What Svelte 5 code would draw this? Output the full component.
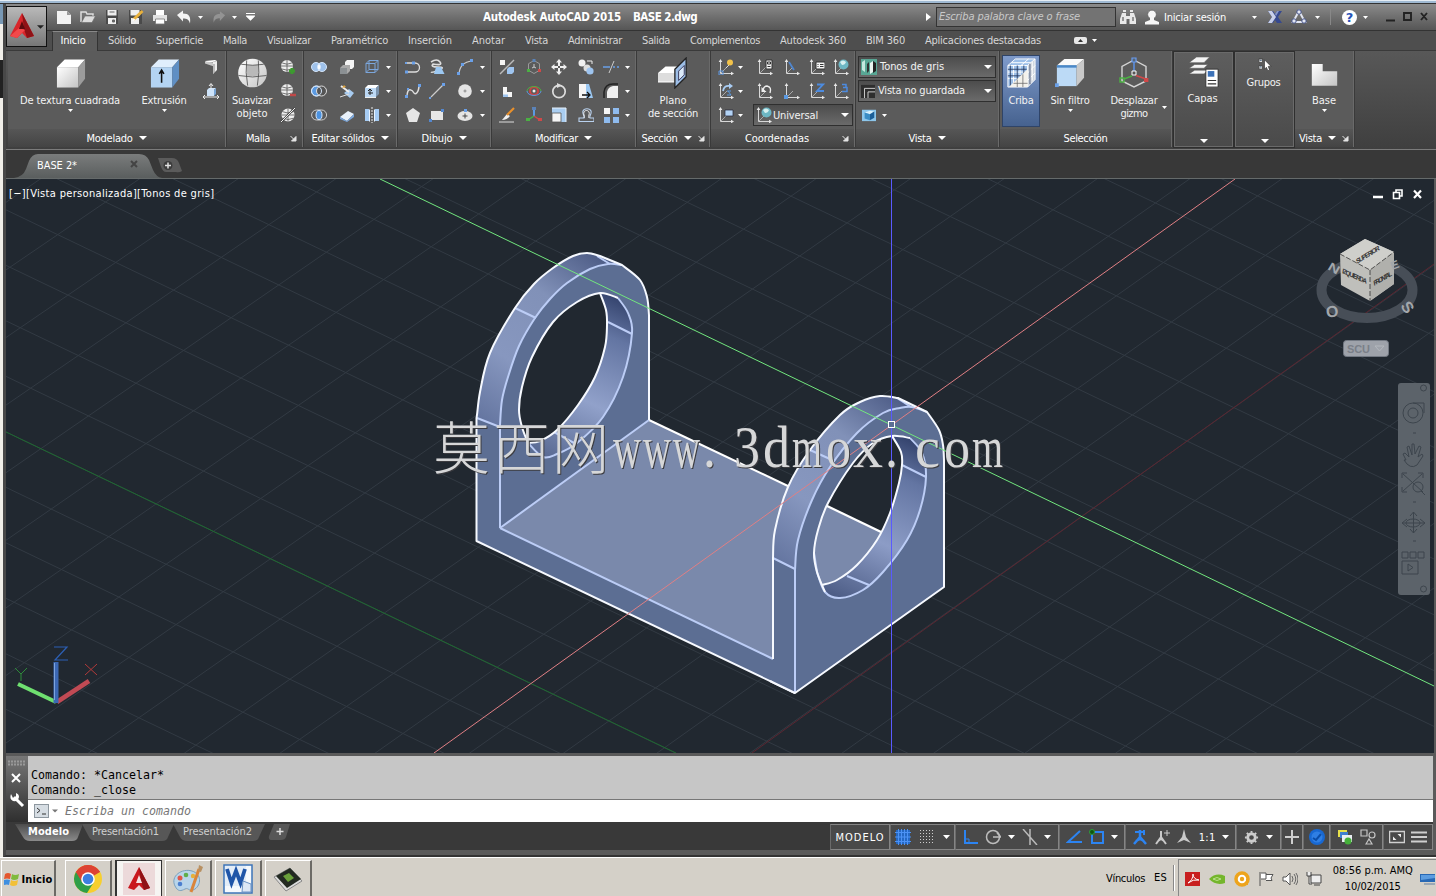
<script>
  // Stretches or tightens tracking so a label occupies the given width.
  function fit(node, w) {
    const n = [...node.textContent].length;
    const natural = node.getBoundingClientRect().width;
    node.style.letterSpacing = (w - natural) / n + 'px';
  }

  // Catmull-Rom spline through the points, as a chain of cubic segments.
  function curve(p, closed = false) {
    const n = p.length;
    const at = (i) => (closed ? p[(i + n) % n] : p[Math.max(0, Math.min(n - 1, i))]);
    let d = '';
    for (let i = 0; i < (closed ? n : n - 1); i++) {
      const [a, b, c, e] = [at(i - 1), at(i), at(i + 1), at(i + 2)];
      d += `C${b[0] + (c[0] - a[0]) / 6} ${b[1] + (c[1] - a[1]) / 6} ${c[0] - (e[0] - b[0]) / 6} ${c[1] - (e[1] - b[1]) / 6} ${c[0]} ${c[1]}`;
    }
    return d;
  }
  const start = (p) => `M${p[0][0]} ${p[0][1]}`;

  const lOuter = [[477,418],[480,392],[490,353],[515,308],[534,284],[553,268],[573,256],[587,253],[600,256]];
  const lEnd = [[622,265],[640,280],[647,297],[649,315]];
  const lFront = [[500,425],[502,400],[508,377],[519,346],[535,318],[550,299],[567,283],[590,269],[608,264],[622,265]];
  const lHole = [[519,410],[522,387],[532,357],[553,322],[577,302],[600,293],[618,298],[628,313],[632,333],[623,377],[603,417],[577,443],[557,454],[543,457],[528,443],[522,427]];
  const lRim = [[600,293],[606,310],[607,325],[605,347],[595,377],[578,405],[557,430],[540,441],[528,443]];
  const rOuter = [[773,558],[775,530],[788,487],[810,450],[840,415],[860,402],[880,396],[898,398]];
  const rEnd = [[927,412],[939,430],[943,445],[944,460]];
  const rFront = [[795,570],[798,540],[812,500],[830,467],[857,433],[883,413],[900,408],[912,407],[927,412]];
  const rHole = [[814,553],[818,530],[828,503],[853,463],[873,443],[892,436],[910,438],[922,453],[926,477],[920,510],[907,540],[883,572],[863,590],[840,598],[825,592],[817,572]];
  const rRim = [[892,436],[901,452],[902,465],[899,483],[890,513],[877,540],[857,565],[837,580],[822,585]];

  const lSil = start(lOuter) + curve(lOuter) + 'L622 265' + curve(lEnd) + 'V420';
  const rSil = start(rOuter) + curve(rOuter) + 'L927 412' + curve(rEnd) + 'V587';
  const lHoleD = start(lHole) + curve(lHole, true) + 'Z';
  const rHoleD = start(rHole) + curve(rHole, true) + 'Z';
  const lSee = start(lRim) + curve(lRim) + curve([lHole[14], lHole[15], ...lHole.slice(0, 6)]) + 'Z';
  const rSee = start(rRim) + curve(rRim) + 'L817 572' + curve([rHole[15], ...rHole.slice(0, 6)]) + 'Z';

  const gridA = Array.from({ length: 24 }, (_, i) => i - 16).map((k) => [429 + 55.5 * k, 1117 + 55.8 * k]);
  const gridB = Array.from({ length: 24 }, (_, i) => i - 6).map((k) => [1288 - 67.6 * k, 265 - 64.6 * k]);

  const mark = [['w',613,28],['w',643,28],['w',673,27],['.',703,13],['3',734,26],['d',763,27],['m',792,30],['o',826,25],['x',853,30],['.',885,13],['c',915,25],['o',944,26],['m',972,31]];

  const tabs = [['Inicio',46,25],['Sólido',48,28],['Superficie',67,47],['Malla',44,24],['Visualizar',64,44],['Paramétrico',77,57],['Inserción',64,44],['Anotar',53,33],['Vista',43,23],['Administrar',74,54],['Salida',48,28],['Complementos',90,70],['Autodesk 360',86,66],['BIM 360',59,39],['Aplicaciones destacadas',136,116]];

  const ucs = '<path d="M2.500 1v13.500H15" fill="none" stroke="#d8d8d8" stroke-width="1"/><path d="M2.500 0l-1.800 3h3.600zM16 14.500l-3-1.800v3.600z" fill="#e8e8e8"/><path d="M3 14l6-6" stroke="#aaa" fill="none"/>';
  const globe = (x, y, r, c = '#eee') => `<circle cx="${x}" cy="${y}" r="${r}" fill="${c}"/><path d="M${x - r} ${y}h${2 * r}M${x} ${y - r}v${2 * r}M${x - r * .8} ${y - r * .5}q${r * .8} ${r * .4} ${r * 1.6} 0M${x - r * .8} ${y + r * .5}q${r * .8} ${r * .4} ${r * 1.6} 0" stroke="#555" stroke-width=".8" fill="none"/>`;

  const icons = {
    new: '<path d="M1 2h10l4 4v9H1z" fill="#f2f2f2"/><path d="M11 2v4h4z" fill="#999"/>',
    open: '<path d="M1 13V3h5l1 2h6v2" fill="none" stroke="#ddd" stroke-width="1.500"/><path d="M1.500 13.500L5 7h10.500L12 13.500z" fill="#dcdcdc" stroke="#666" stroke-width=".6"/>',
    save: '<path d="M2 1h12v14H2z" fill="#4a4a4a"/><path d="M3.500 1h9v5.500h-9zM4 9h8v6H4z" fill="#eee"/><path d="M5.500 3h5M8.500 11h2v2h-2z" stroke="#666" fill="#666"/>',
    saveas: '<path d="M1 1h13v14H1z" fill="#4a4a4a"/><path d="M2.500 1h9v5.500h-9zM3 9h8v6H3z" fill="#eee"/><path d="M5.500 10.500L14.500 2" stroke="#e8b13c" stroke-width="3"/><path d="M4.500 12l3-1-2-2z" fill="#fff"/>',
    print: '<path d="M4 1h8v5H4z" fill="#fff"/><path d="M1 6h14v6H1z" fill="#e3e3e3"/><path d="M3.500 10h9v5h-9z" fill="#fff" stroke="#777" stroke-width=".8"/>',
    undo: '<path d="M1 6l6-4.500v3c6 0 8 3 7 10-1-4-3-5-7-5v3z" fill="#f4f4f4"/>',
    redo: '<path d="M15 6L9 1.500v3c-6 0-8 3-7 10 1-4 3-5 7-5v3z" fill="#939393"/>',
    box: '<path d="M1 5L5 1h10.500L12 5z" fill="#fff"/><path d="M1 5h11v10.500H1z" fill="url(#gw)"/><path d="M12 5l3.500-4v10L12 15.500z" fill="#9c9c9c"/>',
    extr: '<path d="M1 5L5 1h10.500L12 5z" fill="#e0eefc"/><path d="M1 5h11v10.500H1z" fill="#b4d4f3"/><path d="M12 5l3.500-4v10L12 15.500z" fill="#5f8fc4"/><path d="M6.500 13V7M5.300 8.500l1.200-2 1.200 2" stroke="#111" stroke-width=".8" fill="none"/>',
    poly3: '<path d="M2 2l10-1 2 1-9 2z" fill="#fff"/><path d="M2 2.500l9 1v4l-3-1-6-2z" fill="#c9c9c9"/><path d="M10 3l4-1v9l-4 4z" fill="#eee"/><path d="M11 5v9" stroke="#888"/>',
    pull: '<path d="M4 7l2-2h7l-2 2zM4 7h7v6H4z" fill="#cfe4fa"/><path d="M11 7l2-2v6l-2 2z" fill="#79a5d6"/><path d="M8 6V1M6 3l2-2.500L10 3M0 14h16M2 12l-2 2 2 2M14 12l2 2-2 2" stroke="#eee" fill="none"/>',
    sphere: '<circle cx="8" cy="8" r="7.400" fill="url(#gw)"/><path d="M5 3.700q3 .6 6 0v5.600q-3 .6-6 0z" fill="#b9b9b9"/><path d="M.8 9.300q7.200 1.500 14.400 0M2.200 3.500q6 1 11.600 0M5 1.500q-.8 6 .5 13M11 1.500q.8 6-.5 13" stroke="#444" stroke-width=".4" fill="none"/>',
    m1: globe(7, 7, 6) + '<path d="M9 12h6M12 9v6" stroke="#3c9b2f" stroke-width="3"/>',
    m2: globe(7, 7, 6) + '<path d="M10 12h6" stroke="#c04848" stroke-width="2.500"/>',
    m3: globe(8, 8, 6.500) + '<path d="M1 15L15 1" stroke="#444" stroke-width="2"/><path d="M1 15L15 1" stroke="#eee"/>',
    uni: '<circle cx="5" cy="8" r="4.500" fill="#9ec1ea"/><circle cx="11" cy="8" r="4.500" fill="#9ec1ea"/><path d="M8 4.700a4.500 4.500 0 0 0 0 6.600a4.500 4.500 0 0 0 0-6.600" fill="#fff"/><circle cx="5" cy="8" r="4.500" fill="none" stroke="#d5e6fa"/><circle cx="11" cy="8" r="4.500" fill="none" stroke="#d5e6fa"/>',
    sub: '<circle cx="5.500" cy="8" r="5" fill="#5b9ae2" stroke="#d5e6fa"/><circle cx="10.500" cy="8" r="5" fill="#555" stroke="#ddd"/><circle cx="5.500" cy="8" r="5" fill="none" stroke="#d5e6fa"/>',
    int: '<rect x=".6" y="3" width="15" height="10" rx="5" fill="none" stroke="#ccc"/><ellipse cx="8" cy="8" rx="3" ry="4.500" fill="#4b92e0" stroke="#d5e6fa"/>',
    es1: '<path d="M6 3l2-2h7v7l-2 2H6z" fill="#f4f4f4"/><path d="M1 9l3-3h7v6l-3 3H1z" fill="#aaa"/><path d="M1 9h7v6H1z" fill="#8b9093"/>',
    es2: '<path d="M5 10l5-4 5 4-4 5z" fill="#a7cbf0"/><path d="M2 3l8 6" stroke="#eee" stroke-width="2"/><path d="M3 5l2-3 2 2z" fill="#e2a43a"/><path d="M1 14l9-3" stroke="#ddd"/>',
    es3: '<path d="M1 10l8-6 6 3-7 7z" fill="#e8f1fb"/><path d="M1 10l7 4 7-7v3l-7 5-7-3z" fill="#7aa7dd"/>',
    es4: '<path d="M2 4.500h9v9H2zM5 1.500h9v9H5zM2 4.500l3-3M11 4.500l3-3M11 13.500l3-3M2 13.500l3-3" fill="none" stroke="#7ba6dc"/>',
    es5: '<path d="M1 5l3-3h11l-3 3z" fill="#fff"/><path d="M1 5h11v9H1z" fill="#bcd8f4"/><path d="M12 5l3-3v9l-3 3z" fill="#7b93ad"/><path d="M1 14.500h11" stroke="#eee"/><path d="M6 12V6M4 8l2-2 2 2M4 10h5" stroke="#222" fill="none"/>',
    es6: '<path d="M1 2h4v12H1zM11 2h4v12h-4z" fill="#a6cbf2"/><path d="M5 2l1 1v12l-1-1zM11 2l-1 1v12l1-1z" fill="#e8f3ff"/><path d="M8 0v16" stroke="#eee" stroke-dasharray="2 1"/>',
    pl: '<path d="M2 4h8a4.500 4.500 0 0 1 0 9H2" fill="none" stroke="#ddd" stroke-width="1.300"/><path d="M7 2.500h3v3H7zM0 11.500h3v3H0zM0 3h2v2H0z" fill="#6aa0e8"/>',
    spline: '<path d="M2 14C2 2 8 8 9 10s5 0 5-8" fill="none" stroke="#ddd" stroke-width="1.500"/><path d="M0 12h3v3H0zM13 1h3v3h-3zM2 5h2v2H2z" fill="#6aa0e8"/>',
    pent: '<path d="M8 1l7 5-3 9H4L1 6z" fill="#e6e6e6"/>',
    helix: '<path d="M2 3q6-4 9 0t-7 2q-3 3 5 3t1 3-8 2" fill="none" stroke="#ddd" stroke-width="1.600"/><path d="M7 8h5l3.500 7H5z" fill="#9cc8f2"/>',
    line: '<path d="M2 14L14 2" stroke="#ccc" stroke-width="1.200"/><path d="M0 14h2v2H0zM13 0h3v3h-3z" fill="#6aa0e8"/>',
    rect: '<path d="M2 4h12v9H2z" fill="#e6e6e6"/><path d="M0 12h3v3H0zM12 2h3v3h-3z" fill="#5487ce"/>',
    arc: '<path d="M2 15Q3 3 15 2" fill="none" stroke="#ccc" stroke-width="1.200"/><path d="M0 13h3v3H0zM13 0h3v3h-3zM4 4h3v3H4z" fill="#6aa0e8"/>',
    circ: '<circle cx="8" cy="8" r="6.800" fill="#e4e4e4"/><path d="M6.500 8h3M8 6.500v3" stroke="#888"/>',
    ell: '<ellipse cx="8" cy="9" rx="7.500" ry="5" fill="#e4e4e4"/><path d="M5.500 9h5M8 6.500v5" stroke="#444"/><path d="M7 2h3v3H7z" fill="#6aa0e8"/>',
    sc1: '<path d="M1 1h5v5H1z" fill="#f5f5f5"/><path d="M1 15L15 1" stroke="#bbb" stroke-width="1.500"/><path d="M8 10l2-2h5v5l-2 2H8z" fill="#9ec4ef"/>',
    sc2: '<path d="M4 4h4v5h5v5H4z" fill="#f5f5f5"/><path d="M4 11.500h5V14H4z" fill="#9ec4ef"/>',
    brush: '<path d="M0 15h15" stroke="#ddd"/><path d="M3 13l5-6 3 2q-3 4-8 4" fill="#f0f0f0"/><path d="M8 8l7-7" stroke="#e9902c" stroke-width="2.200"/>',
    g1: '<path d="M8 1.500l5.500 3.200v6.600L8 14.500l-5.500-3.200V4.700z" fill="none" stroke="#9a9a9a"/><path d="M8 5v3M8 8l-2 1M8 8l2 1" stroke="#ccc"/><path d="M6.500 0h3v3h-3z" fill="#5b83b8"/><path d="M1 10h3v3H1z" fill="#4bb043"/><path d="M12 10h3v3h-3z" fill="#d04848"/>',
    g2: '<circle cx="8" cy="8" r="4" fill="none" stroke="#c94444" stroke-width="2"/><path d="M1 8a7 4.500 0 0 1 14 0" fill="none" stroke="#4bb043"/><path d="M1 8a7 4.500 0 0 0 14 0" fill="none" stroke="#5b9ae2"/><circle cx="8" cy="8" r="1.500" fill="#eee"/>',
    g3: '<path d="M8 9V1" stroke="#5b9ae2" stroke-width="2"/><path d="M8 9l-6 4" stroke="#4bb043" stroke-width="1.500"/><path d="M8 9l6 4" stroke="#d04848" stroke-width="1.500"/><path d="M0 11h4v3H0z" fill="#4bb043"/><path d="M12 11h4v3h-4z" fill="#d04848"/><path d="M6 0h4v3H6z" fill="#5b83b8"/>',
    move: '<path d="M8 0l3 3.500H9V7H7V3.500H5zM8 16l3-3.500H9V9H7v3.500H5zM0 8l3.500-3v2H7v2H3.500v2zM16 8l-3.500-3v2H9v2h3.500v2z" fill="#f0f0f0"/>',
    rot: '<circle cx="8" cy="8.500" r="6.200" fill="none" stroke="#ddd" stroke-width="1.700"/><path d="M6 0l5 2.500-5 2.500z" fill="#ddd"/>',
    scale: '<path d="M1 1h14v14H1z" fill="#a9cdf0"/><path d="M1 6h9v9H1z" fill="#f4f4f4" stroke="#555" stroke-width=".8"/><path d="M1 1h14v14" stroke="#e7f2fd" fill="none"/>',
    copy: '<circle cx="4" cy="4" r="3.500" fill="#f0f0f0"/><circle cx="9" cy="9" r="3.500" fill="#ddd"/><circle cx="12" cy="12" r="3.600" fill="#9ec4ef"/><path d="M9 2h5v3" stroke="#eee" fill="none"/>',
    stretch: '<path d="M1 1h7v14H1z" fill="#f5f5f5"/><path d="M8 1h3l4 14H8z" fill="#9cc8f2"/><path d="M4 12h7M9 9l3 3-3 3" stroke="#111" fill="none" stroke-width="1.300"/>',
    offset: '<path d="M1 14.500h15v-3.500h-4c-1-2 2-4 1-7s-7-3-8 0 2 5 1 7H1z" fill="none" stroke="#b9d1ee" stroke-width="1.100"/><path d="M6 11c1-2-1-4 0-6s4-2 5 0-1 4 0 6" fill="none" stroke="#eee"/>',
    trim: '<path d="M0 8h7M10 8h2M14 8h2" stroke="#6aa0e8" stroke-width="1.500"/><path d="M6 14L11 2" stroke="#ccc"/>',
    fillet: '<path d="M4 15V9q1-5 6-6h5v12z" fill="#f0f0f0"/><path d="M1 15V9Q2 1 10 1h5" fill="none" stroke="#222" stroke-width="1.500"/>',
    array: '<path d="M1 1h6v6H1z" fill="#f5f5f5"/><path d="M10 1h6v6h-6zM1 10h6v6H1zM10 10h6v6h-6z" fill="#8fbbee"/>',
    u1: ucs + '<path d="M8 9l4-4" stroke="#ddd"/><circle cx="12" cy="3.500" r="3" fill="#f2c24a"/><path d="M1 12h4v4H1z" fill="none" stroke="#5f98e2"/>',
    u2: ucs + '<path d="M5 8q1-6 7-5" fill="none" stroke="#a9cdf4" stroke-width="1.800"/><path d="M11 0l4 3-4 3z" fill="#a9cdf4"/><path d="M9 8h4M9 12h4l-3-4" stroke="#5b9ae2" fill="none"/>',
    u3: ucs + '<path d="M7 3h8v6H7z" fill="#b3d3f5" stroke="#223" stroke-width=".7"/>',
    u4: ucs + '<path d="M9 1h6v9H9z" fill="#f5f5f5" stroke="#333"/><path d="M10.500 3h3v2h-3zM10.500 7.500h3" stroke="#333" fill="none"/>',
    u5: ucs + '<path d="M6 7q1-4 4-4 5 1 3 7" fill="none" stroke="#eee" stroke-width="1.400"/><path d="M4.500 4v5h5z" fill="#eee"/>',
    u6: ucs + '<path d="M5 3l5 8" stroke="#4f86cf" stroke-width="1.800"/>',
    u7: ucs + '<path d="M0 12h4v4H0z" fill="#5b9ae2"/>',
    u8: ucs + '<path d="M7 3h9v7H7z" fill="#f5f5f5" stroke="#333"/><path d="M8.500 5.500h1M11 5.500h3.500M8.500 7.500h1M11 7.500h3.500" stroke="#333"/>',
    u9: ucs + '<path d="M8 1.500h6l-6 6.500h7" stroke="#4c8be0" stroke-width="1.800" fill="none"/>',
    u10: ucs + '<circle cx="10.500" cy="5.500" r="5" fill="#6db7c4"/><path d="M7 3q3-3 6 0-1 3-4 3z" fill="#d7f0f0"/>',
    u11: ucs + '<path d="M9 1.500h4v3h-3 4v4H9" stroke="#4c8be0" stroke-width="1.500" fill="none"/>',
    tonos: '<path d="M0 0h16v16H0z" fill="#58a795"/><path d="M1 3l3-2v12l-3-2z" fill="#c5e8de"/><path d="M6 5l2-2v9l-2 2z" fill="#333"/><path d="M9 4l3-2v11l-3 2z" fill="#e9f4f0"/><path d="M12 2l3 2v8l-3 2z" fill="#222"/>',
    vistag: '<path d="M0 1h16v15H0z" fill="#2e2e2e"/><path d="M4 16V5h12M8 16V9h8" stroke="#ddd" fill="none"/>',
    cubeb: '<path d="M0 2h16v13H0z" fill="#8dc6ea"/><path d="M3 5l6-2 5 1-5 3z" fill="#d9f0fb"/><path d="M3 5l6 2v7l-6-2z" fill="#3a8cc4"/><path d="M9 7l5-3v7l-5 3z" fill="#1b5f98"/>',
    plano: '<path d="M0 8l4-3.500h7V9l-2 4H0z" fill="#fff"/><path d="M0 8h9v4.500H0z" fill="#ddd"/><path d="M9 6l6-6v10l-6 6z" fill="#9cbde6" stroke="#222" stroke-width=".7"/><path d="M11 7l3-3v5l-3 3z" fill="#dcebfb" stroke="#335" stroke-width=".5"/>',
    criba: '<path d="M1 4l4-3.500h10.500v11L11.500 15.500H1z" fill="#9dbfe8"/><path d="M11.500 4l4-3.500v11l-4 4z" fill="#cfd6df"/><path d="M1 4h10.500v11.500H1zM1 4L5 .5h10.500v11l-4 4M11.500 4l4-3.500M4 4v11M7.500 4v11M1 7.500h10M1 11h10M3 2.500h10v11M14 2v10M8 4l4-3.500M11.500 8l4-4M11.500 12l4-4" fill="none" stroke="#fff" stroke-width=".5"/><path d="M2.300 4v11M6 4v11M9.500 4v11M1 6h10M1 9.500h10M12.800 3v11" fill="none" stroke="#22355a" stroke-width=".45"/><path d="M1.500 15.500l10-9.500v9.500z" fill="#f4f2ec"/><path d="M6 15.500V11.500M9 15.500V8.700M4 13.500h7.500" stroke="#666" stroke-width=".4"/>',
    filtro: '<path d="M1 4l4-3.500h10.500l-4 3.500z" fill="#fafafa"/><path d="M1 4h10.500v11H1z" fill="#bcdaf6"/><path d="M11.500 4l4-3.500v10l-4 4.500z" fill="#c9c9c9"/><path d="M1 4.500h10.500" stroke="#4a88c8" stroke-width="1.300"/><path d="M0 13.500h2v2H0z" fill="#6aa0e8"/>',
    gizmo: '<path d="M8 1.500l6 3.200v7.300L8 15l-6-3V4.700z" fill="none" stroke="#d5d5d5" stroke-width=".7"/><path d="M8 2v5" stroke="#5b8fe0" stroke-width=".8"/><path d="M7 .5h2v2H7z" fill="#567" stroke="#6a9cf0" stroke-width=".6"/><path d="M7 7h2v2H7z" fill="#555" stroke="#fff" stroke-width=".5"/><path d="M3 11l4-1.500" stroke="#4bb043" stroke-width=".7"/><path d="M9 9.200l5 1.800" stroke="#d04848" stroke-width=".8"/><path d="M1 10.500h2v2H1z" fill="none" stroke="#4bb043" stroke-width=".7"/><path d="M13 10.500h2.200v2H13z" fill="#d04848"/>',
    capas: '<path d="M0 3l4-3h7L8 3zM0 6l3-2h7L8 6zM0 9l3-2h7L8 9z" fill="#f4f4f4" stroke="#555" stroke-width=".3"/><path d="M9 6.500h6.500V16H9z" fill="#fff" stroke="#222" stroke-width=".4"/><path d="M10 7.500h3.500v3H10z" fill="#3c72b8"/><path d="M10 12.500h4.500M10 14.300h4.500" stroke="#333" stroke-width=".6"/>',
    grupos: '<path d="M2 2h4v4H2zM2 9h4v4H2z" fill="#ddd" stroke="#444"/><path d="M3 3.500h2M3 10.500h2" stroke="#357"/><path d="M8 3l7 7h-3l1.500 4-2 .5L10 11l-2 2z" fill="#fff" stroke="#333" stroke-width=".7"/>',
    base: '<path d="M1 3h6v4h8v8H1z" fill="url(#gw)"/>',
    bino: '<path d="M2 4h4v3h4V4h4l2 6v5H9.500v-5h-3v5H0v-5z" fill="#e9e9e9"/><path d="M3 1h3v2H3zM10 1h3v2h-3z" fill="#e9e9e9"/><path d="M3 8v4M13 8v4" stroke="#444"/>',
    user: '<circle cx="8" cy="5.500" r="4.300" fill="#f6f6f6" stroke="#555" stroke-width=".6"/><path d="M6 9h4v2l5 2v2.500H1V13l5-2z" fill="#f6f6f6"/>',
    x: '<path d="M1 2h5l2 3 2-3h5l-4 6 4 6h-5l-2-3-2 3H1l4-6z" fill="#36498f"/><path d="M1 2h4l4 6-4 6H1l4-6z" fill="#c8d0ea"/><path d="M8 5l2-3h2l-3 5z" fill="#8796c8"/>',
    a360: '<path d="M8 2L2 13h12z" fill="none" stroke="#e2e6f2" stroke-width="2"/><circle cx="8" cy="3" r="2.200" fill="#e2e6f2" stroke="#46558c"/><circle cx="3" cy="12" r="2.200" fill="#e2e6f2" stroke="#46558c"/><circle cx="13" cy="12" r="2.200" fill="#e2e6f2" stroke="#46558c"/>',
    gridf: '<path d="M1 1h14v14H1z" fill="#2468c4"/><path d="M3.500 0v16M6.500 0v16M9.500 0v16M12.500 0v16M0 3.500h16M0 8h16M0 12.500h16" stroke="#4c92f5"/>',
    dots: '<path d="M1 1.500h15M1 4.500h15M1 7.500h15M1 10.500h15M1 13.500h15" stroke="#cfcfcf" stroke-dasharray="1 2"/>',
    ortho: '<path d="M2 1v13h13" stroke="#2c84f2" stroke-width="2" fill="none"/><path d="M2 10h4v4" stroke="#2c84f2" fill="none"/>',
    polar: '<circle cx="8" cy="8" r="6.500" fill="none" stroke="#bdbdbd" stroke-width="1.500"/><path d="M16 8H8M12 4l4 4" stroke="#bdbdbd" stroke-width="1.500"/>',
    iso: '<path d="M1 0l14 16M8 0v16" stroke="#b9b9b9" stroke-width="1.500"/>',
    osnap: '<path d="M14 2L2 13h14" fill="none" stroke="#2c84f2" stroke-width="2"/>',
    osq: '<path d="M3 3h11v11H3z" fill="none" stroke="#2c84f2" stroke-width="2"/><circle cx="3" cy="3" r="2.500" fill="#151" stroke="#2e9e3b"/>',
    an1: '<path d="M8 1v7l-6 7M8 8l6 7M4 12l4-2 4 2" stroke="#2c84f2" stroke-width="2.500" fill="none"/><path d="M3 3h10M12 1v5" stroke="#2c84f2" stroke-width="2"/>',
    an2: '<path d="M7 2v6l-5 7M7 8l5 7M4 12l3-2 3 2" stroke="#c9c9c9" stroke-width="2" fill="none"/><path d="M13 1v6M10 4h6" stroke="#c9c9c9"/>',
    an3: '<path d="M8 0l2 8 5 6-7-3-7 3 5-6z" fill="#c9c9c9"/>',
    gear: '<circle cx="8" cy="8" r="4" fill="none" stroke="#ccc" stroke-width="3"/><path d="M8 1v2M8 13v2M1 8h2M13 8h2M3 3l1.500 1.500M11.500 11.500L13 13M13 3l-1.500 1.500M4.500 11.500L3 13" stroke="#ccc" stroke-width="2"/>',
    plus: '<path d="M8 1v14M1 8h14" stroke="#cfcfcf" stroke-width="2"/>',
    blue: '<circle cx="8" cy="8" r="8" fill="#1868d2"/><circle cx="8" cy="8" r="5.500" fill="#2f7fe4"/><path d="M4 9l3 2 5-6" stroke="#0b4da8" stroke-width="2" fill="none"/>',
    hw: '<path d="M1 1h9v7H1z" fill="#e7e04a"/><path d="M3 3h8v6H3z" fill="#3f7fd0"/><path d="M5 6h10v7H5z" fill="#e8eef2"/><circle cx="11" cy="12" r="3.500" fill="#45b03a"/>',
    isol: '<path d="M1 1h6v6H1zM6 15l3-5 3 5z" fill="none" stroke="#c5c5c5" stroke-width="1.200"/><circle cx="12" cy="6" r="3" fill="none" stroke="#c5c5c5" stroke-width="1.200"/>',
    full: '<path d="M.5 2.500h15v11H.5z" fill="none" stroke="#d0d0d0" stroke-width="1.500"/><path d="M4 11v-3.500L7.500 11zM12 5v3.500L8.500 5z" fill="#eee"/>',
    menu: '<path d="M0 3.500h16M0 8h16M0 12.500h16" stroke="#cfcfcf" stroke-width="1.800"/>'
  };

  const editar = ['uni','es1','es4','>','sub','es2','es5','>','int','es3','es6','>'];
  const dibujo = ['pl','helix','arc','>','spline','line','circ','>','pent','rect','ell','>'];
  const modificar = ['sc1','g1','move','copy','trim','>','sc2','g2','rot','stretch','fillet','>','brush','g3','scale','offset','array','>'];
  const coord = ['u1','>','u4','u6','u8','u10','u2','>','u5','u7','u9','u11','u3','>'];
</script>

{#snippet ic(name, s = 16)}
  <svg class="ic" width={s} height={s} viewBox="0 0 16 16">{@html icons[name]}</svg>
{/snippet}
{#snippet arr(w = 7)}
  <svg class="arr" width={w} height={Math.ceil(w / 2)} viewBox="0 0 8 4" preserveAspectRatio="none"><path d="M0 0h8L4 4z" fill="#fff" /></svg>
{/snippet}
{#snippet launch()}
  <svg class="launch" width="7" height="7" viewBox="0 0 7 7"><path d="M.5 1l4 4M6 1.500V6H1.500z" stroke="#e5e5e5" fill="#e5e5e5" /></svg>
{/snippet}
{#snippet foot(label, w, tri = true, lau = false)}
  <div class="foot"><span use:fit={w}>{label}</span>{#if tri}{@render arr(8)}{/if}{#if lau}{@render launch()}{/if}</div>
{/snippet}
{#snippet cells(list)}
  {#each list as c}{#if c === '>'}<i class="c">{@render arr(5)}</i>{:else}<i class="c">{@render ic(c)}</i>{/if}{/each}
{/snippet}

<div class="screen">
  <svg width="0" height="0" class="defs"><defs>
    <linearGradient id="gw" x1="0" y1="0" x2="1" y2="1"><stop offset="0" stop-color="#fff" /><stop offset="1" stop-color="#c4c4c4" /></linearGradient>
  </defs></svg>
  <div class="strip"></div>
  <div class="mid">
    <div class="edge"><b></b><u></u><s></s></div>
    <div class="win">
      <div class="appbtn">
        <svg width="26" height="28" viewBox="0 0 26 28"><path d="M13 0L1 23l7 2 5-5 5 5 7-2z" fill="#d8262b" /><path d="M13 0l12 23-7 2-3-9z" fill="#8f1216" /><path d="M1 23l7 2 8-8-6-2z" fill="#f2494b" /><path d="M13 8l3 8h-6z" fill="#5c0b0e" /></svg>
        <svg width="7" height="4" viewBox="0 0 8 4"><path d="M0 0h8L4 4z" fill="#222" /></svg>
      </div>

      <header class="title">
        <div class="qat">
          {@render ic('new')}{@render ic('open')}{@render ic('save')}{@render ic('saveas')}{@render ic('print')}{@render ic('undo')}
          <em>{@render arr(5)}</em>{@render ic('redo', 14)}<em>{@render arr(5)}</em>
          <svg width="9" height="8" viewBox="0 0 9 8"><path d="M0 .5h9M.5 3h8L4.500 7z" stroke="#fff" fill="#fff" stroke-width="1.200" /></svg>
        </div>
        <div class="cap"><span use:fit={138}>Autodesk AutoCAD 2015</span><span use:fit={64}>BASE 2.dwg</span></div>
        <svg class="play" width="5" height="8" viewBox="0 0 5 8"><path d="M0 0l5 4-5 4z" fill="#fff" /></svg>
        <div class="search"><span use:fit={141}>Escriba palabra clave o frase</span></div>
        <div class="tools">
          {@render ic('bino')}{@render ic('user')}<span use:fit={62}>Iniciar sesión</span>
          <em class="far">{@render arr(5)}</em>{@render ic('x')}{@render ic('a360')}{@render arr(5)}
          <i class="vs"></i>
          <b class="help">?</b>{@render arr(5)}
        </div>
        <svg class="wc" width="42" height="12" viewBox="0 0 42 12"><path d="M0 9.500h9M18 2h7v7h-7zM35 2l6 7M41 2l-6 7" stroke="#222" stroke-width="1.900" fill="none" /></svg>
      </header>

      <nav class="tabs">
        {#each tabs as t, i}<div class="tab" class:on={i === 0} style="width:{t[1]}px"><span use:fit={t[2]}>{t[0]}</span></div>{/each}
        <div class="mini"><svg width="13" height="7" viewBox="0 0 13 7"><rect width="13" height="7" rx="2" fill="#e8e8e8" /><path d="M4 5l2.500-3L9 5z" fill="#333" /></svg>{@render arr(5)}</div>
      </nav>

      <section class="ribbon">
        <div class="panel" style="width:219px">
          <div class="body">
            <div class="big" style="width:124px">{@render ic('box', 31)}<span use:fit={100}>De textura cuadrada</span>{@render arr(5)}</div>
            <div class="big" style="width:64px">{@render ic('extr', 31)}<span use:fit={45}>Extrusión</span>{@render arr(5)}</div>
            <div class="stack">{@render ic('poly3')}{@render ic('pull')}</div>
          </div>
          {@render foot('Modelado', 46)}
        </div>
        <div class="panel" style="width:77px">
          <div class="body">
            <div class="big" style="width:50px">{@render ic('sphere', 31)}<span use:fit={40}>Suavizar</span><span use:fit={31}>objeto</span></div>
            <div class="stack tight">{@render ic('m1')}{@render ic('m2')}{@render ic('m3')}</div>
          </div>
          <div class="foot spread"><span use:fit={24}>Malla</span>{@render launch()}</div>
        </div>
        <div class="panel" style="width:94px">
          <div class="body grid g4">{@render cells(editar)}</div>
          {@render foot('Editar sólidos', 63)}
        </div>
        <div class="panel" style="width:94px">
          <div class="body grid gd">{@render cells(dibujo)}</div>
          {@render foot('Dibujo', 31)}
        </div>
        <div class="panel" style="width:145px">
          <div class="body grid gm">{@render cells(modificar)}</div>
          {@render foot('Modificar', 43)}
        </div>
        <div class="panel" style="width:74px">
          <div class="body"><div class="big" style="width:72px">{@render ic('plano', 30)}<span use:fit={27}>Plano</span><span use:fit={50}>de sección</span></div></div>
          {@render foot('Sección', 36, true, true)}
        </div>
        <div class="panel" style="width:145px">
          <div class="body grid gc">{@render cells(coord)}<div class="combo uni">{@render ic('u10')}<span use:fit={45}>Universal</span>{@render arr(8)}</div></div>
          <div class="foot spread co"><span use:fit={64}>Coordenadas</span>{@render launch()}</div>
        </div>
        <div class="panel" style="width:144px">
          <div class="body vw">
            <div class="combo">{@render ic('tonos')}<span use:fit={64}>Tonos de gris</span>{@render arr(8)}</div>
            <div class="combo">{@render ic('vistag', 14)}<span use:fit={87}>Vista no guardada</span>{@render arr(8)}</div>
            <div class="row">{@render ic('cubeb', 14)}{@render arr(5)}</div>
          </div>
          {@render foot('Vista', 23)}
        </div>
        <div class="panel" style="width:173px">
          <div class="body">
            <div class="big sel">{@render ic('criba', 30)}<span use:fit={25}>Criba</span></div>
            <div class="big" style="width:60px">{@render ic('filtro', 30)}<span use:fit={39}>Sin filtro</span>{@render arr(5)}</div>
            <div class="big" style="width:68px">{@render ic('gizmo', 32)}<span use:fit={47}>Desplazar</span><span use:fit={27}>gizmo</span><div class="side">{@render arr(5)}</div></div>
          </div>
          {@render foot('Selección', 44, false)}
        </div>
        <div class="panel fold" style="width:61px">{@render ic('capas', 30)}<span use:fit={30}>Capas</span><em>{@render arr(8)}</em></div>
        <div class="panel fold gr" style="width:61px">{@render ic('grupos', 15)}<span use:fit={34}>Grupos</span><em>{@render arr(8)}</em></div>
        <div class="panel" style="width:60px">
          <div class="body"><div class="big" style="width:58px">{@render ic('base', 29)}<span use:fit={24}>Base</span>{@render arr(5)}</div></div>
          {@render foot('Vista', 23, true, true)}
        </div>
      </section>

      <div class="docs">
        <svg width="180" height="25" viewBox="0 0 180 25">
          <defs><linearGradient id="dt" x1="0" y1="0" x2="0" y2="1"><stop offset="0" stop-color="#7a7c7c" /><stop offset="1" stop-color="#5a5e5e" /></linearGradient></defs>
          <path d="M8 25q9-1 12-9l3-8q3-7 9-7h101q7 0 10 6l4 10q3 7 9 8z" fill="url(#dt)" />
          <path d="M152 5h14q5 0 7 5l3 8q-3 2-6 1h-10q-3 0-5-5z" fill="#5b5b5b" /><circle cx="162" cy="12.500" r="4.500" fill="#3c3c3c" /><path d="M162 9.500v6M159 12.500h6" stroke="#e0e0e0" stroke-width="1.500" />
          <path d="M125 8l6 6M131 8l-6 6" stroke="#444" stroke-width="2" />
          <text x="31" y="15.500" textLength="40" lengthAdjust="spacingAndGlyphs">BASE 2*</text>
        </svg>
      </div>

      <svg class="view" width="1428" height="574" viewBox="6 179 1428 574">
        <defs>
          <linearGradient id="ls" gradientUnits="userSpaceOnUse" x1="480" y1="430" x2="600" y2="255"><stop offset="0" stop-color="#60719c" /><stop offset=".35" stop-color="#8797bf" /><stop offset=".7" stop-color="#8191b8" /><stop offset="1" stop-color="#4d5c86" /></linearGradient>
          <linearGradient id="rs" gradientUnits="userSpaceOnUse" x1="775" y1="570" x2="900" y2="398"><stop offset="0" stop-color="#60719c" /><stop offset=".35" stop-color="#8797bf" /><stop offset=".7" stop-color="#8191b8" /><stop offset="1" stop-color="#4d5c86" /></linearGradient>
          <linearGradient id="li" gradientUnits="userSpaceOnUse" x1="615" y1="295" x2="540" y2="460"><stop offset="0" stop-color="#33426c" /><stop offset=".22" stop-color="#6375a2" /><stop offset=".6" stop-color="#91a1ca" /><stop offset="1" stop-color="#55668f" /></linearGradient>
          <linearGradient id="ri" gradientUnits="userSpaceOnUse" x1="910" y1="438" x2="835" y2="600"><stop offset="0" stop-color="#33426c" /><stop offset=".22" stop-color="#6375a2" /><stop offset=".6" stop-color="#8c9cc6" /><stop offset="1" stop-color="#4a5a83" /></linearGradient>
          <clipPath id="seeR"><path d={rSee} /></clipPath>
        </defs>
        <rect x="6" y="179" width="1428" height="574" fill="#212830" />
        <g stroke="#323a43" stroke-width="1">
          {#each gridA as g}<line x1="0" y1={g[0]} x2="1434" y2={g[1]} />{/each}
          {#each gridB as g}<line x1="0" y1={g[0]} x2="1434" y2={g[1]} />{/each}
        </g>
        <line x1="6" y1="432" x2="676" y2="753" stroke="#1e6a30" />
        <line x1="752" y1="753" x2="1434" y2="264" stroke="#5c2630" />

        <path d={lSil + 'L500 528L476 541V418Z'} fill="url(#ls)" />
        <path d={start(lFront) + curve(lFront) + curve(lEnd) + 'V420L500 528Z'} fill="#5c6e93" />
        <path d="M477 418L500 427V528L773 659V558L795 570V693L476 541Z" fill="#5c6e93" />
        <path d="M500 528L649 420L830 506V640L773 659Z" fill="#7a89ab" />
        <path d={lHoleD} fill="url(#li)" /><path d={lSee} fill="#212830" />
        <path d="M649 420L790 487" stroke="#fff" stroke-width="2" />
        <g class="soft"><path d="M500 528L649 420M773 659L500 528M500 528V425" /><path d={start(lFront) + curve(lFront)} /><path d="M515 308l21 10M477 418l23 9M597 256l13 8M608 322l24 12M554 432l20 11" /><path d={start(lHole.slice(6)) + curve(lHole.slice(6, 15))} /></g>
        <path class="hard" d={'M795 693L476.500 541V418' + curve(lOuter) + 'L622 265' + curve(lEnd) + 'V420'} />
        <path class="hard" d={start(lRim) + curve(lRim)} />
        <path class="hard" d={start(lHole.slice(14)) + curve([lHole[14], lHole[15], ...lHole.slice(0, 7)])} />

        <path d={rSil + 'L795 693V659H773Z'} fill="url(#rs)" />
        <path d={start(rFront) + curve(rFront) + curve(rEnd) + 'V587L795 693Z'} fill="#5c6e93" />
        <path d="M773 558L795 570V693L773 682Z" fill="#5c6e93" />
        <path d={rHoleD} fill="url(#ri)" /><path d={rSee} fill="#212830" />
        <g clip-path="url(#seeR)"><path d="M800 493L900 541V620H800Z" fill="#7a89ab" /><path d="M800 493L900 541" stroke="#fff" stroke-width="2.200" /></g>
        <g class="soft"><path d={start(rFront) + curve(rFront) + 'M795 693V570'} /><path d="M810 450l20 9M773 558l22 11M897 398l14 9M902 465l24 12M847 576l22 9" /><path d={start(rHole.slice(6)) + curve(rHole.slice(6)) + 'L814 553'} /></g>
        <path class="hard" d={'M773 659V558' + curve(rOuter) + 'L927 412' + curve(rEnd) + 'V587L795 693L770 681'} />
        <path class="hard" d={start(rRim) + curve(rRim)} />
        <path class="hard" d={start(rHole.slice(14)) + curve([rHole[14], rHole[15], ...rHole.slice(0, 7)])} />

        <line x1="380" y1="179" x2="1434" y2="686" stroke="#72e67e" />
        <line x1="434" y1="753" x2="1235" y2="179" stroke="#e07f84" />
        <rect x="891" y="179" width="1" height="574" fill="#5a5aff" shape-rendering="crispEdges" />
        <rect x="888.500" y="421.500" width="6" height="6" fill="#5c6e93" stroke="#fff" />

        <g class="mark">
          <text class="han" x="433" y="469">莫</text><text class="han" x="493" y="469">西</text><text class="han" x="552" y="469">网</text>
          {#each mark as m}<text class="lat" x={m[1]} y="467" textLength={m[2]} lengthAdjust="spacingAndGlyphs">{m[0]}</text>{/each}
        </g>

        <text class="vl" x="9" y="197" textLength="205">[−][Vista personalizada][Tonos de gris]</text>
        <path d="M1373 197h10" stroke="#fff" stroke-width="2.500" />
        <path d="M1393.500 192.500h6v6h-6zM1396 192v-2h6v6h-2" fill="none" stroke="#fff" stroke-width="1.600" />
        <path d="M1414 190.500l7 7.500M1421 190.500l-7 7.500" stroke="#fff" stroke-width="2.200" />

        <ellipse cx="1367" cy="290" rx="45.500" ry="28" fill="none" stroke="#474e57" stroke-width="10" />
        <path d="M1340 254l25-15 29 13v32l-24 17-29-16z" fill="#bfbfbb" />
        <path d="M1340 254l25-15 29 13-24 18z" fill="#cfcfcb" /><path d="M1370 270l24-18v32l-24 17z" fill="#b0b0ac" />
        <path d="M1340 254l30 16 24-18M1370 270v31" stroke="#333" stroke-dasharray="5 2" fill="none" stroke-width=".8" />
        <text class="cube" transform="translate(1357 264) rotate(-32) skewX(-15)" textLength="27">SUPERIOR</text>
        <text class="cube" transform="translate(1342 273) rotate(24) skewX(15)" textLength="27">IZQUIERDA</text>
        <text class="cube" transform="translate(1374 286) rotate(-30) skewX(-20)" textLength="21">FRONTAL</text>
        <g class="comp"><text transform="translate(1327 269) rotate(30) scale(1 .75)">N</text><text transform="translate(1392 270) rotate(-20) scale(.8 .7)">E</text><text transform="translate(1327 318) rotate(-10)">O</text><text transform="translate(1400 306) rotate(55)">S</text></g>
        <rect x="1343.500" y="340.500" width="45" height="16" rx="3" fill="#9ea2aa" stroke="#737983" />
        <text x="1347" y="352.500" class="scu" textLength="23">SCU</text><path d="M1375 346h9l-4.500 5z" fill="none" stroke="#b4b8be" />

        <rect x="1398" y="383" width="32" height="212" rx="3" fill="#5c636a" />
        <g fill="none" stroke="#3d454d" stroke-width="1">
          <circle cx="1423.500" cy="388" r="3" /><circle cx="1423.500" cy="589" r="3" />
          <circle cx="1413" cy="413" r="10" /><circle cx="1413" cy="413" r="5" /><path d="M1413 403h11v10" />
          <path d="M1406 460l-3-6 2-1 4 4-2-10 2-1 3 9 0-11h2l1 10 4-8 2 1-3 10 4-3 1 2-6 9q-7 5-13-5z" />
          <path d="M1403 474l20 18M1422 474l-19 17M1402 478v-5h5M1418 473h5v5M1402 487v5h5" /><circle cx="1418" cy="487" r="5" /><path d="M1421 491l4 4" />
          <path d="M1413.500 512v21M1410 516l3.500-4 3.500 4M1410 529l3.500 4 3.500-4M1403 523h21M1407 519l-5 4 5 4M1420 519l5 4-5 4" /><ellipse cx="1413" cy="523" rx="7" ry="4" />
          <path d="M1402 552h6v6h-6zM1410 552h6v6h-6zM1418 552h6v6h-6zM1402 561h16v13h-16zM1408 564l5 3.500-5 3.500z" />
          <path d="M1413 433h3M1413 502h3M1413 541h3" />
        </g>

        <g stroke-linecap="butt"><path d="M18 684l38 18" stroke="#6fe070" stroke-width="4" /><path d="M89 681l-32 21" stroke="#c04a54" stroke-width="4.500" /><path d="M56 703V662" stroke="#3c68b4" stroke-width="5" /><path d="M54.500 700V663" stroke="#7ea4dd" /></g>
        <path d="M54 647h13l-12 13h13" fill="none" stroke="#2d5fb4" stroke-width="1.200" /><path d="M15 668l6 6 6-6M21 674v7" fill="none" stroke="#2e8b3a" /><path d="M85 664l12 11M97 664l-12 11" stroke="#b23a3a" />
      </svg>

      <section class="cmd">
        <div class="grip">
          <svg width="22" height="66" viewBox="0 0 22 66"><path d="M2 5.500h18M2 8.500h18" stroke="#999" stroke-width="2" stroke-dasharray="2 1" /><path d="M6 18l8 8M14 18l-8 8" stroke="#fff" stroke-width="2" /><path d="M8 41l9 9" stroke="#fff" stroke-width="3" /><path d="M5 38q-2 5 2 7 5 1 6-4 0-3-3-4v4l-3 1z" fill="#fff" /></svg>
        </div>
        <div class="log">
          <p>Comando: *Cancelar*</p><p>Comando: _close</p>
          <div class="inp"><svg width="15" height="14" viewBox="0 0 15 14"><rect x=".5" y=".5" width="14" height="13" fill="#d6dde3" stroke="#8d979f" /><path d="M3 4l3 2.500L3 9M8 10h4" stroke="#333" fill="none" /></svg><svg width="6" height="4" viewBox="0 0 8 4"><path d="M0 0h8L4 4z" fill="#777" /></svg><i>Escriba un comando</i></div>
        </div>
      </section>

      <footer class="bot">
        <svg width="290" height="21" viewBox="0 0 290 21">
          <defs><linearGradient id="bt" x1="0" y1="0" x2="0" y2="1"><stop offset="0" stop-color="#4c4c4c" /><stop offset="1" stop-color="#8a8a8a" /></linearGradient></defs>
          <path d="M268 2h16l-4 13q-1 3-5 3h-9q-4 0-3-4zM167 2h92l-6 13q-1 4-6 4h-66q-5 0-7-4zM76 2h92l-6 13q-1 4-6 4H90q-5 0-7-4z" fill="#575757" />
          <path d="M9 2h68l-5 13q-1 4-6 4H24q-5 0-7-4z" fill="url(#bt)" />
          <text class="b" x="22" y="13" textLength="41">Modelo</text><text x="86" y="13" textLength="67">Presentación1</text><text x="177" y="13" textLength="69">Presentación2</text>
          <path d="M274 6v7M270.500 9.500h7" stroke="#ddd" stroke-width="1.500" />
        </svg>
        <div class="status">
          <div style="width:60px"><span use:fit={49}>MODELO</span></div>
          <div style="width:65px">{@render ic('gridf')}<u></u>{@render ic('dots')}<u></u>{@render arr(7)}</div>
          <div style="width:104px">{@render ic('ortho')}{@render ic('polar')}{@render arr(7)}{@render ic('iso')}{@render arr(7)}</div>
          <div style="width:66px">{@render ic('osnap')}{@render ic('osq')}{@render arr(7)}</div>
          <div style="width:111px">{@render ic('an1')}{@render ic('an2')}{@render ic('an3')}<span use:fit={17}>1:1</span>{@render arr(7)}</div>
          <div style="width:45px">{@render ic('gear', 15)}{@render arr(7)}</div>
          <div style="width:22px">{@render ic('plus')}</div>
          <div style="width:27px">{@render ic('blue')}</div>
          <div style="width:53px">{@render ic('hw')}{@render ic('isol')}</div>
          <div style="width:50px">{@render ic('full')}{@render ic('menu')}</div>
        </div>
      </footer>
    </div>
  </div>

  <div class="task">
    <div class="tb start"><svg width="16" height="15" viewBox="0 0 16 15"><path d="M1 2q3-2 6 0L6 7Q3 6 0 7z" fill="#e4572e" /><path d="M8 2q3 2 7 0l-1 5q-4 2-7 0z" fill="#7fba3c" /><path d="M0 8q3-1 6 0l-1 5q-2-1-5 0z" fill="#3f8fe0" /><path d="M7 8q3 2 7 0l-1 5q-4 2-7 0z" fill="#f2c037" /></svg><span use:fit={31}>Inicio</span></div>
    <i class="gap"></i>
    <div class="tb"><svg width="30" height="30" viewBox="0 0 30 30"><circle cx="15" cy="15" r="14" fill="#f7cf2e" /><path d="M15 15L2.900 8A14 14 0 0 1 27.100 8z" fill="#dd4334" /><path d="M2.900 8A14 14 0 0 0 14 29l7-11-6-3z" fill="#2f9e48" /><path d="M15 8h12.100A14 14 0 0 0 2.900 8L9 18z" fill="#dd4334" /><circle cx="15" cy="15" r="6.800" fill="#fff" /><circle cx="15" cy="15" r="5.300" fill="#3d7fe0" /></svg></div>
    <div class="tb down"><svg width="32" height="32" viewBox="0 0 32 32"><rect width="32" height="32" fill="#ecd9da" /><path d="M16 4L5 25l6 2 5-5 5 5 6-2z" fill="#c9181e" /><path d="M16 4l11 21-6 2-3-9z" fill="#8f1216" /><path d="M16 12l3 8h-6z" fill="#f5e6e6" /></svg></div>
    <div class="tb"><svg width="32" height="30" viewBox="0 0 32 30"><path d="M3 22C-2 12 10 4 20 7s9 14 3 18-6-2-10 0-7 3-10-3z" fill="#b9d5ea" stroke="#7ba0bd" /><circle cx="8" cy="14" r="2.500" fill="#e0574a" /><circle cx="14" cy="11" r="2.300" fill="#5fae4c" /><circle cx="8" cy="20" r="2.300" fill="#4b7fcf" /><circle cx="21" cy="12" r="2.200" fill="#e5b03c" /><path d="M19 28L27 5" stroke="#d9853b" stroke-width="3" /><path d="M26 7l1-6 4 2-2 5z" fill="#b89062" /></svg></div>
    <div class="tb"><svg width="30" height="30" viewBox="0 0 30 30"><path d="M1 1h28v28H1z" fill="#f5f9fd" stroke="#3d74b8" stroke-width="1.500" /><path d="M2 2h21v20H2z" fill="#e3edf8" /><path d="M4 5l4.500 14L13 7l4.500 12L22 5" fill="none" stroke="#1f55a8" stroke-width="3.800" /><path d="M20 17l8 3v8h-9z" fill="#dde8f5" stroke="#6a92c4" /></svg></div>
    <div class="tb"><svg width="30" height="26" viewBox="0 0 30 26"><path d="M1 11L17 2l12 13-16 10z" fill="#dcdcdc" stroke="#888" /><path d="M3 10L17 2l11 11-14 9z" fill="#232a22" /><path d="M10 10l6-3 5 5-6 4z" fill="#69a03a" /></svg></div>
    <div class="tray">
      <span class="v" use:fit={39}>Vínculos</span><span class="es" use:fit={13}>ES</span><i class="sep"></i>
      <div class="box">
        <svg width="16" height="16" viewBox="0 0 16 16"><rect y="1" width="15" height="14" fill="#c81f1f" /><path d="M3 12q5-3 5-9 0 5 6 6-6-1-11 3" stroke="#fff" fill="none" /></svg>
        <svg width="16" height="16" viewBox="0 0 16 16"><path d="M0 8q7-7 16-3v7q-9 3-16-4" fill="#74b62c" /><path d="M4 8q4-3 8 0-4 3-8 0" fill="none" stroke="#b9e08a" /></svg>
        <svg width="16" height="16" viewBox="0 0 16 16"><circle cx="8" cy="8" r="6" fill="#fff" stroke="#eda41c" stroke-width="3.500" /><circle cx="8" cy="8" r="2.200" fill="#eda41c" /><path d="M13 8v6" stroke="#eda41c" stroke-width="2" /></svg>
        <svg width="16" height="16" viewBox="0 0 16 16"><path d="M2 1v14M3 2h5v6H3M8 3.500h7L13 7l1 2.500H8" stroke="#555" fill="#fff" /></svg>
        <svg width="16" height="16" viewBox="0 0 16 16"><path d="M1 6h3l4-4v12l-4-4H1z" fill="#fff" stroke="#555" /><path d="M10 5q2 3 0 6M12 3q3.500 5 0 10M14 2q4 6 0 12" stroke="#666" fill="none" /></svg>
        <svg width="16" height="16" viewBox="0 0 16 16"><path d="M5 4h10v8H5zM8 14h6M1 1v4h4V1M3 5v8h3" stroke="#444" fill="#eee" /></svg>
        <div class="clock"><span use:fit={80}>08:56 p.m. AMQ</span><span use:fit={56}>10/02/2015</span></div>
        <svg width="15" height="14" viewBox="0 0 15 14"><path d="M0 2h15v8H0z" fill="#2868b4" /><path d="M1 3h14v3L1 8z" fill="#5c9ce0" /><path d="M4 11h11v2H4z" fill="#9aa7b5" /></svg>
      </div>
    </div>
  </div>
</div>

<style>
  :global(body) { margin: 0; overflow: hidden; }
  .screen { width: 1436px; height: 896px; display: flex; flex-direction: column; overflow: hidden; background: #eee; color: #f2f2f2; font: 11px/13px "DejaVu Sans Condensed", "DejaVu Sans", sans-serif; white-space: nowrap; }
  .defs { position: absolute; }
  svg { display: block; flex: none; }
  .strip { height: 4px; flex: none; background: linear-gradient(#e6eef5 0 1px, #9fb9d2 1px 3px, #333 3px); }
  .mid { height: 853px; display: flex; flex: none; }
  .edge { width: 3px; background: #f1efe9; display: flex; flex-direction: column; }
  .edge b { height: 20px; background: #7898b4; }
  .edge u { height: 36px; }
  .edge s { height: 38px; background: #222; }
  .win { position: relative; box-sizing: border-box; width: 1433px; height: 853px; border-left: 3px solid #484848; background: #5a5a5a; border-bottom: 2px solid #333; display: flex; flex-direction: column; }
  .win > * { flex: none; }
  .appbtn { position: absolute; left: 0; top: 2px; width: 37px; height: 39px; border: 1px solid #111; background: linear-gradient(#b9b9b9, #777); display: flex; align-items: center; padding-left: 2px; gap: 1px; z-index: 2; }
  .appbtn svg + svg { margin-left: 1px; }
  .title { height: 27px; display: flex; align-items: center; background: linear-gradient(#8b8b8b, #6f6f6f 50%, #565656); border-bottom: 1px solid #333; box-sizing: border-box; overflow: hidden; }
  .qat { width: 427px; padding-left: 50px; box-sizing: border-box; display: flex; align-items: center; gap: 8px; }
  .qat em { display: flex; width: 6px; margin-left: -2px; }
  .cap { width: 444px; padding-left: 50px; box-sizing: border-box; font-weight: bold; font-size: 11.500px; display: flex; gap: 12px; color: #fff; }
  .play { margin: 0 5px 0 49px; }
  .search { width: 180px; height: 20px; box-sizing: border-box; border: 1px solid #333; background: #737373; padding: 2px; font-style: italic; color: #c9c9c9; }
  .tools { display: flex; align-items: center; gap: 6px; margin-left: 4px; width: 250px; }
  .tools :global(.ic) { margin-right: 2px; }
  .tools > span { color: #fff; margin-left: -4px; margin-right: 4px; }
  .far { display: flex; margin: 0 4px 0 16px; }
  .vs { width: 1px; height: 16px; background: #888; margin: 0 5px 0 4px; }
  .help { width: 15px; height: 15px; border-radius: 50%; background: #fff; color: #2853b8; font: bold 13px/15px "DejaVu Sans", sans-serif; text-align: center; }
  .wc { margin-left: 16px; }
  .cap, .qat, .search, .tools { flex: none; }
  .tabs { height: 20px; display: flex; padding-left: 46px; background: #4e4e4e; box-sizing: border-box; border-bottom: 1px solid #3a3a3a; color: #d6d6d6; }
  .tab { height: 20px; box-sizing: border-box; text-align: center; padding-top: 3px; }
  .tab.on { background: #5c5c5c; border: 1px solid #333; border-bottom: 0; padding: 2px 4px 0 0; color: #fff; border-top-color: #888; }
  .mini { display: flex; align-items: center; gap: 5px; padding-left: 23px; }
  .ribbon { height: 99px; padding-left: 2px; display: flex; box-sizing: border-box; border-bottom: 1px solid #7b7b7b; background: linear-gradient(#585858, #3f3f3f); }
  .panel { flex: none; box-sizing: border-box; height: 96px; border-right: 1px solid #3a3a3a; box-shadow: inset -1px 0 #6a6a6a; background: #5b5b5b; display: flex; flex-direction: column; }
  .body { height: 78px; display: flex; padding-top: 4px; box-sizing: border-box; }
  .big { display: flex; flex-direction: column; align-items: center; padding-top: 2px; box-sizing: border-box; height: 72px; position: relative; }
  .big :global(.ic) { height: 32px; margin-bottom: 5px; }
  .big :global(.arr) { margin-top: 2px; }
  .side { position: absolute; right: 1px; top: 49px; }
  .sel { width: 38px; margin-left: 2px; padding-top: 1px; border: 1px solid #2f4468; background: linear-gradient(#7f9bcb, #46628f); }
  .stack { padding: 4px 0 0 7px; display: flex; flex-direction: column; gap: 8px; }
  .stack.tight { padding-left: 3px; }
  .grid { display: grid; grid-auto-rows: 24px; padding-left: 7px; align-content: start; }
  .g4 { grid-template-columns: 28px 25px 22px 8px; }
  .gd { grid-template-columns: 24px 28px 23px 8px; }
  .gm { grid-template-columns: 27px 25px 27px 25px 22px 8px; }
  .gc { grid-template-columns: 20px 19px 27px 25px 24px 20px; }
  .c { display: flex; align-items: center; height: 24px; }
  .combo { box-sizing: border-box; height: 22px; border: 1px solid #2f2f2f; background: linear-gradient(#4c4c4c, #6a6a6a); display: flex; align-items: center; gap: 3px; padding: 0 3px 0 2px; }
  .combo span { margin-top: -2px; }
  .combo :global(.arr) { margin-left: auto; }
  .uni { grid-column: 3 / 7; margin: 1px 0 0 -4px; width: 100px; gap: 1px; }
  .uni span { margin-top: 0; }
  .vw { flex-direction: column; gap: 2px; padding: 5px 3px 0 2px; }
  .row { display: flex; align-items: center; gap: 6px; padding: 4px 0 0 4px; }
  .foot { height: 18px; background: linear-gradient(#565656, #444); display: flex; align-items: center; justify-content: center; gap: 6px; margin-right: 1px; color: #fff; }
  .foot.spread { padding: 0 5px 0 19px; justify-content: space-between; }
  .foot.co { padding: 0 5px 0 34px; }
  .fold { align-items: center; height: 97px; padding-top: 5px; background: linear-gradient(#5e5e5e, #4a4a4a); border: 1px solid #2f2f2f; box-shadow: inset 0 0 0 1px #6a6a6a; }
  .fold span { margin-top: 5px; margin-right: 2px; }
  .fold.gr span { margin-top: 4px; }
  .fold em { margin-top: auto; margin-bottom: 4px; }
  .docs { height: 29px; background: #383838; border-bottom: 1px solid #656a6a; box-sizing: border-box; padding-top: 3px; }
  .docs text { fill: #fff; font-size: 11px; }
  .soft { fill: none; stroke: #bccdf6; stroke-width: 2; }
  .hard { fill: none; stroke: #f6f9ff; stroke-width: 2; stroke-linejoin: round; }
  .mark { fill: #d6d7d8; filter: drop-shadow(1.500px 1.500px 0 #3c3c40); }
  .han { font: 300 57px "Noto Sans CJK SC", sans-serif; }
  .lat { font: 60px "Liberation Serif", serif; }
  .vl { fill: #fff; font-size: 11px; }
  .cube { font: bold 6.500px "Liberation Sans", sans-serif; fill: #333; }
  .comp { font: bold 16px "Liberation Sans", sans-serif; fill: #a3a7ab; }
  .scu { font: bold 11px "Liberation Sans", sans-serif; fill: #7a7f88; }
  .cmd { margin-top: 3px; height: 66px; display: flex; }
  .grip { width: 22px; background: linear-gradient(#777, #2f2f2f); }
  .log { width: 1405px; background: #c6c6c6; padding: 12px 0 0; box-sizing: border-box; color: #000; font: 11.630px/15px "DejaVu Sans Mono", monospace; display: flex; flex-direction: column; }
  .log p { margin: 0; padding-left: 3px; height: 15px; }
  .inp { margin-top: 1px; height: 23px; background: #fff; border-top: 1px solid #777; display: flex; align-items: center; padding-left: 6px; gap: 3px; color: #777; }
  .inp i { margin-left: 4px; font-style: oblique; }
  .bot { height: 28px; width: 1427px; background: #393939; display: flex; justify-content: space-between; }
  .bot text { fill: #cfcfcf; font-size: 11px; }
  .bot .b { fill: #fff; font-weight: bold; }
  .status { display: flex; margin-top: 2px; height: 26px; width: 603px; }
  .status > div { box-sizing: border-box; border: 1px solid #858585; border-left-color: #6b6b6b; background: #494949; display: flex; align-items: center; justify-content: space-evenly; color: #fff; }
  .task { height: 39px; flex: none; background: #d4d0c8; border-top: 1px solid #fff; box-sizing: border-box; display: flex; padding: 2px 0 0 1px; color: #000; }
  .tb { box-sizing: border-box; width: 47px; height: 38px; margin-right: 3px; border: 1px solid #fff; border-right: 2px solid #6c6a66; display: flex; align-items: center; justify-content: center; flex: none; }
  .start { width: 55px; gap: 2px; font-weight: bold; margin: 0; font-size: 11px; }
  .gap { width: 9px; }
  .down { background: #f6f4f2; border: 1px solid #333; border-left-width: 2px; }
  .tray { margin-left: auto; display: flex; align-items: center; }
  .v { margin-right: 9px; }
  .es { margin-right: 6px; padding-bottom: 2px; }
  .sep { width: 1px; height: 26px; background: #888; margin-right: 3px; border-right: 1px solid #fff; }
  .box { border: 1px solid #888; border-width: 1px 0 0 1px; height: 38px; display: flex; align-items: center; gap: 8.300px; padding-left: 6px; width: 251px; }
  .clock { width: 88px; line-height: 16px; display: flex; flex-direction: column; align-items: center; margin-left: 0; margin-right: -7px; padding-right: 4px; box-sizing: border-box; }
</style>
